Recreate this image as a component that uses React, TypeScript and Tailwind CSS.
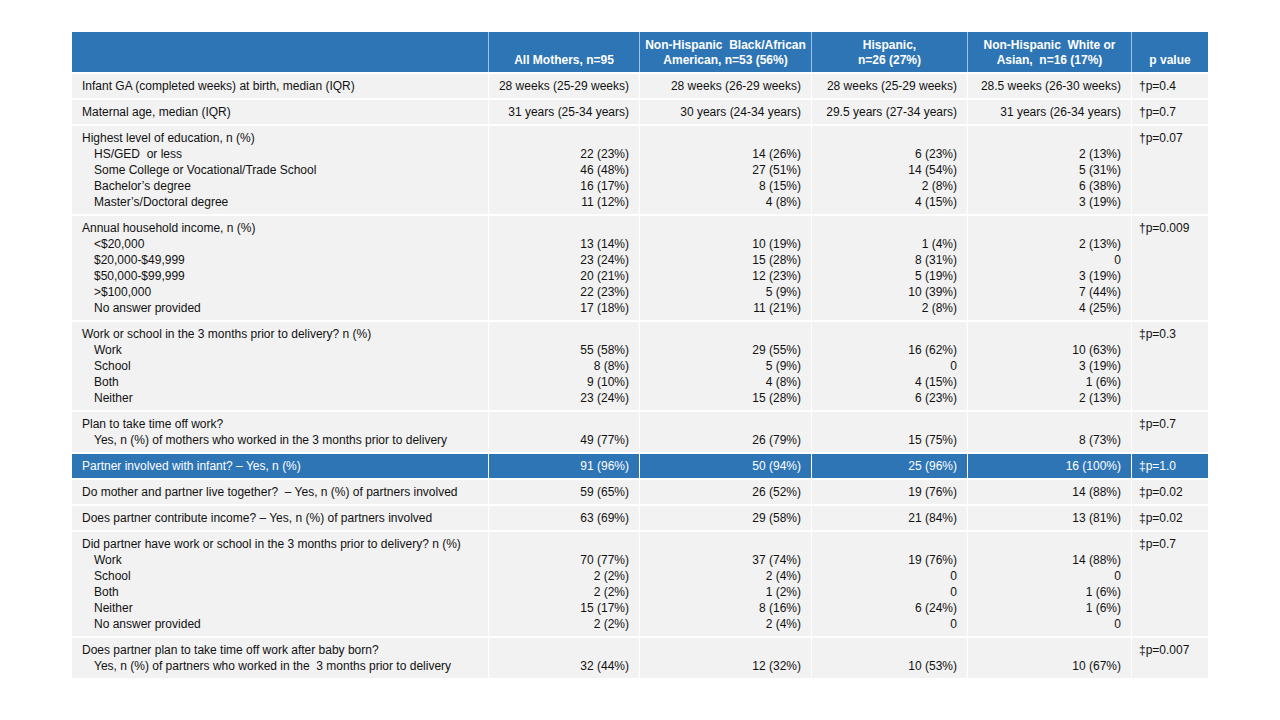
import React from 'react';

type Row = {
  label: string;
  subs?: string[];
  values: string[][];
  p: string;
  highlight?: boolean;
};

const rows: Row[] = [
  {
    label: 'Infant GA (completed weeks) at birth, median (IQR)',
    values: [['28 weeks (25-29 weeks)'], ['28 weeks (26-29 weeks)'], ['28 weeks (25-29 weeks)'], ['28.5 weeks (26-30 weeks)']],
    p: '†p=0.4',
  },
  {
    label: 'Maternal age, median (IQR)',
    values: [['31 years (25-34 years)'], ['30 years (24-34 years)'], ['29.5 years (27-34 years)'], ['31 years (26-34 years)']],
    p: '†p=0.7',
  },
  {
    label: 'Highest level of education, n (%)',
    subs: ['HS/GED  or less', 'Some College or Vocational/Trade School', 'Bachelor’s degree', 'Master’s/Doctoral degree'],
    values: [
      ['22 (23%)', '46 (48%)', '16 (17%)', '11 (12%)'],
      ['14 (26%)', '27 (51%)', '8 (15%)', '4 (8%)'],
      ['6 (23%)', '14 (54%)', '2 (8%)', '4 (15%)'],
      ['2 (13%)', '5 (31%)', '6 (38%)', '3 (19%)'],
    ],
    p: '†p=0.07',
  },
  {
    label: 'Annual household income, n (%)',
    subs: ['<$20,000', '$20,000-$49,999', '$50,000-$99,999', '>$100,000', 'No answer provided'],
    values: [
      ['13 (14%)', '23 (24%)', '20 (21%)', '22 (23%)', '17 (18%)'],
      ['10 (19%)', '15 (28%)', '12 (23%)', '5 (9%)', '11 (21%)'],
      ['1 (4%)', '8 (31%)', '5 (19%)', '10 (39%)', '2 (8%)'],
      ['2 (13%)', '0', '3 (19%)', '7 (44%)', '4 (25%)'],
    ],
    p: '†p=0.009',
  },
  {
    label: 'Work or school in the 3 months prior to delivery? n (%)',
    subs: ['Work', 'School', 'Both', 'Neither'],
    values: [
      ['55 (58%)', '8 (8%)', '9 (10%)', '23 (24%)'],
      ['29 (55%)', '5 (9%)', '4 (8%)', '15 (28%)'],
      ['16 (62%)', '0', '4 (15%)', '6 (23%)'],
      ['10 (63%)', '3 (19%)', '1 (6%)', '2 (13%)'],
    ],
    p: '‡p=0.3',
  },
  {
    label: 'Plan to take time off work?',
    subs: ['Yes, n (%) of mothers who worked in the 3 months prior to delivery'],
    values: [['49 (77%)'], ['26 (79%)'], ['15 (75%)'], ['8 (73%)']],
    p: '‡p=0.7',
  },
  {
    label: 'Partner involved with infant? – Yes, n (%)',
    values: [['91 (96%)'], ['50 (94%)'], ['25 (96%)'], ['16 (100%)']],
    p: '‡p=1.0',
    highlight: true,
  },
  {
    label: 'Do mother and partner live together?  – Yes, n (%) of partners involved',
    values: [['59 (65%)'], ['26 (52%)'], ['19 (76%)'], ['14 (88%)']],
    p: '‡p=0.02',
  },
  {
    label: 'Does partner contribute income? – Yes, n (%) of partners involved',
    values: [['63 (69%)'], ['29 (58%)'], ['21 (84%)'], ['13 (81%)']],
    p: '‡p=0.02',
  },
  {
    label: 'Did partner have work or school in the 3 months prior to delivery? n (%)',
    subs: ['Work', 'School', 'Both', 'Neither', 'No answer provided'],
    values: [
      ['70 (77%)', '2 (2%)', '2 (2%)', '15 (17%)', '2 (2%)'],
      ['37 (74%)', '2 (4%)', '1 (2%)', '8 (16%)', '2 (4%)'],
      ['19 (76%)', '0', '0', '6 (24%)', '0'],
      ['14 (88%)', '0', '1 (6%)', '1 (6%)', '0'],
    ],
    p: '‡p=0.7',
  },
  {
    label: 'Does partner plan to take time off work after baby born?',
    subs: ['Yes, n (%) of partners who worked in the  3 months prior to delivery'],
    values: [['32 (44%)'], ['12 (32%)'], ['10 (53%)'], ['10 (67%)']],
    p: '‡p=0.007',
  },
];

const headers = [
  ['All Mothers, n=95'],
  ['Non-Hispanic  Black/African', 'American, n=53 (56%)'],
  ['Hispanic,', 'n=26 (27%)'],
  ['Non-Hispanic  White or', 'Asian,  n=16 (17%)'],
  ['p value'],
];

export default function App() {
  return (
    <div className="min-h-[720px] w-[1280px] bg-white pt-[32px] pl-[72px] text-[12px] text-[#111] font-['Liberation_Sans',Arial,sans-serif]">
      <div className="grid w-[1136px] grid-cols-[416px_150px_171px_155px_163px_76px] gap-x-px gap-y-[2px]">
        {/* header row, separators are light blue here */}
        <div className="col-span-6 grid grid-cols-subgrid bg-[#9DC3E6]">
          <div className="h-[40px] bg-[#2E75B6]" />
          {headers.map((h, i) => (
            <div key={i} className="flex h-[40px] flex-col items-center justify-end bg-[#2E75B6] pb-[4px] text-center font-bold leading-[15px] text-white whitespace-pre">
              {h.map((line, j) => (
                <div key={j}>{line}</div>
              ))}
            </div>
          ))}
        </div>

        {rows.map((row, ri) => {
          const bg = row.highlight ? 'bg-[#2E75B6] text-white' : 'bg-[#F2F2F2]';
          const blank = row.subs ? [''] : [];
          return (
            <React.Fragment key={ri}>
              <div className={`${bg} px-[10px] py-[4px] leading-[16px] whitespace-pre`}>
                <div>{row.label}</div>
                {row.subs?.map((s, si) => (
                  <div key={si} className="pl-[12px]">{s}</div>
                ))}
              </div>
              {row.values.map((col, ci) => (
                <div key={ci} className={`${bg} py-[4px] pr-[10px] text-right leading-[16px]`}>
                  {[...blank, ...col].map((v, vi) => (
                    <div key={vi} className="h-[16px]">{v}</div>
                  ))}
                </div>
              ))}
              <div className={`${bg} py-[4px] pl-[7px] leading-[16px]`}>{row.p}</div>
            </React.Fragment>
          );
        })}
      </div>
    </div>
  );
}
